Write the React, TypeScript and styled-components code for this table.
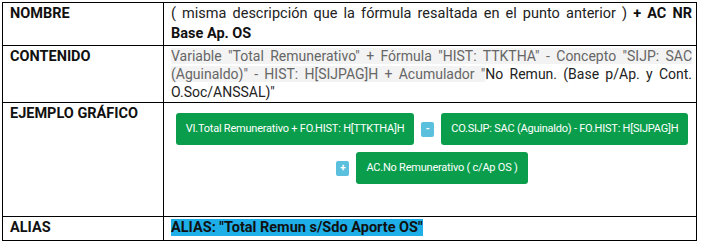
import styled, { createGlobalStyle } from 'styled-components';

const GlobalStyle = createGlobalStyle`
  html, body {
    margin: 0;
    padding: 0;
    background: #ffffff;
  }
  body {
    font-family: Roboto, "Liberation Sans", Arial, sans-serif;
    color: #111;
  }
`;

const Page = styled.div`
  padding: 2px 0 0 2px;
`;

const Table = styled.table`
  width: 695px;
  border-collapse: collapse;
  table-layout: fixed;
`;

const Row = styled.tr<{ $height: number }>`
  height: ${({ $height }) => $height}px;
`;

const Label = styled.td`
  width: 161px;
  box-sizing: border-box;
  border: 1px solid #000;
  vertical-align: top;
  padding: 1px 6px 0 7px;
  font-size: 14.5px;
  line-height: 20px;
  font-weight: 700;
  color: #111;
`;

const Value = styled.td<{ $pad?: string }>`
  border: 1px solid #000;
  vertical-align: top;
  padding: ${({ $pad }) => $pad ?? '1px 4px 0 7px'};
  font-size: 14.5px;
  line-height: 20px;
  color: #222;
  text-align: justify;
`;

const Strong = styled.b`
  font-weight: 700;
  color: #111;
`;

const Content = styled.div`
  font-size: 14px;
  line-height: 18px;
  text-align: justify;
  color: #222;
`;

const Shaded = styled.span`
  background: #f3f3f3;
  color: #666;
`;

const Diagram = styled.div`
  display: flex;
  flex-wrap: wrap;
  justify-content: center;
  align-items: center;
  column-gap: 7px;
  row-gap: 7px;
  padding: 10px 6px 0 10px;
`;

const Pill = styled.span`
  display: inline-flex;
  align-items: center;
  height: 32px;
  padding: 0 10px;
  border-radius: 3px;
  background: #0a9e4c;
  color: #fff;
  font-size: 11px;
  letter-spacing: -0.22px;
  white-space: nowrap;
`;

const Operator = styled.span`
  display: inline-flex;
  align-items: center;
  justify-content: center;
  width: 13px;
  height: 15px;
  border-radius: 2px;
  background: #5bc0de;
  color: #fff;
  font-size: 10px;
  font-weight: 700;
  line-height: 1;
`;

const Highlight = styled.span`
  background: #1eaee8;
  font-weight: 700;
  color: #111;
`;

export default function App() {
  return (
    <Page>
      <GlobalStyle />
      <Table>
        <tbody>
          <Row $height={43}>
            <Label>NOMBRE</Label>
            <Value>
              ( misma descripción que la fórmula resaltada en el punto anterior ){' '}
              <Strong>+ AC NR Base Ap. OS</Strong>
            </Value>
          </Row>
          <Row $height={57}>
            <Label>CONTENIDO</Label>
            <Value>
              <Content>
                <Shaded>
                  Variable "Total Remunerativo" + Fórmula "HIST: TTKTHA" - Concepto "SIJP: SAC
                  (Aguinaldo)" - HIST: H[SIJPAG]H + Acumulador "
                </Shaded>
                No Remun. (Base p/Ap. y Cont. O.Soc/ANSSAL)"
              </Content>
            </Value>
          </Row>
          <Row $height={114}>
            <Label>EJEMPLO GRÁFICO</Label>
            <Value $pad="0">
              <Diagram>
                <Pill>VI.Total Remunerativo + FO.HIST: H[TTKTHA]H</Pill>
                <Operator>-</Operator>
                <Pill>CO.SIJP: SAC (Aguinaldo) - FO.HIST: H[SIJPAG]H</Pill>
                <Operator>+</Operator>
                <Pill>AC.No Remunerativo ( c/Ap OS )</Pill>
              </Diagram>
            </Value>
          </Row>
          <Row $height={24}>
            <Label>ALIAS</Label>
            <Value>
              <Highlight>ALIAS: "Total Remun s/Sdo Aporte OS"</Highlight>
            </Value>
          </Row>
        </tbody>
      </Table>
    </Page>
  );
}
